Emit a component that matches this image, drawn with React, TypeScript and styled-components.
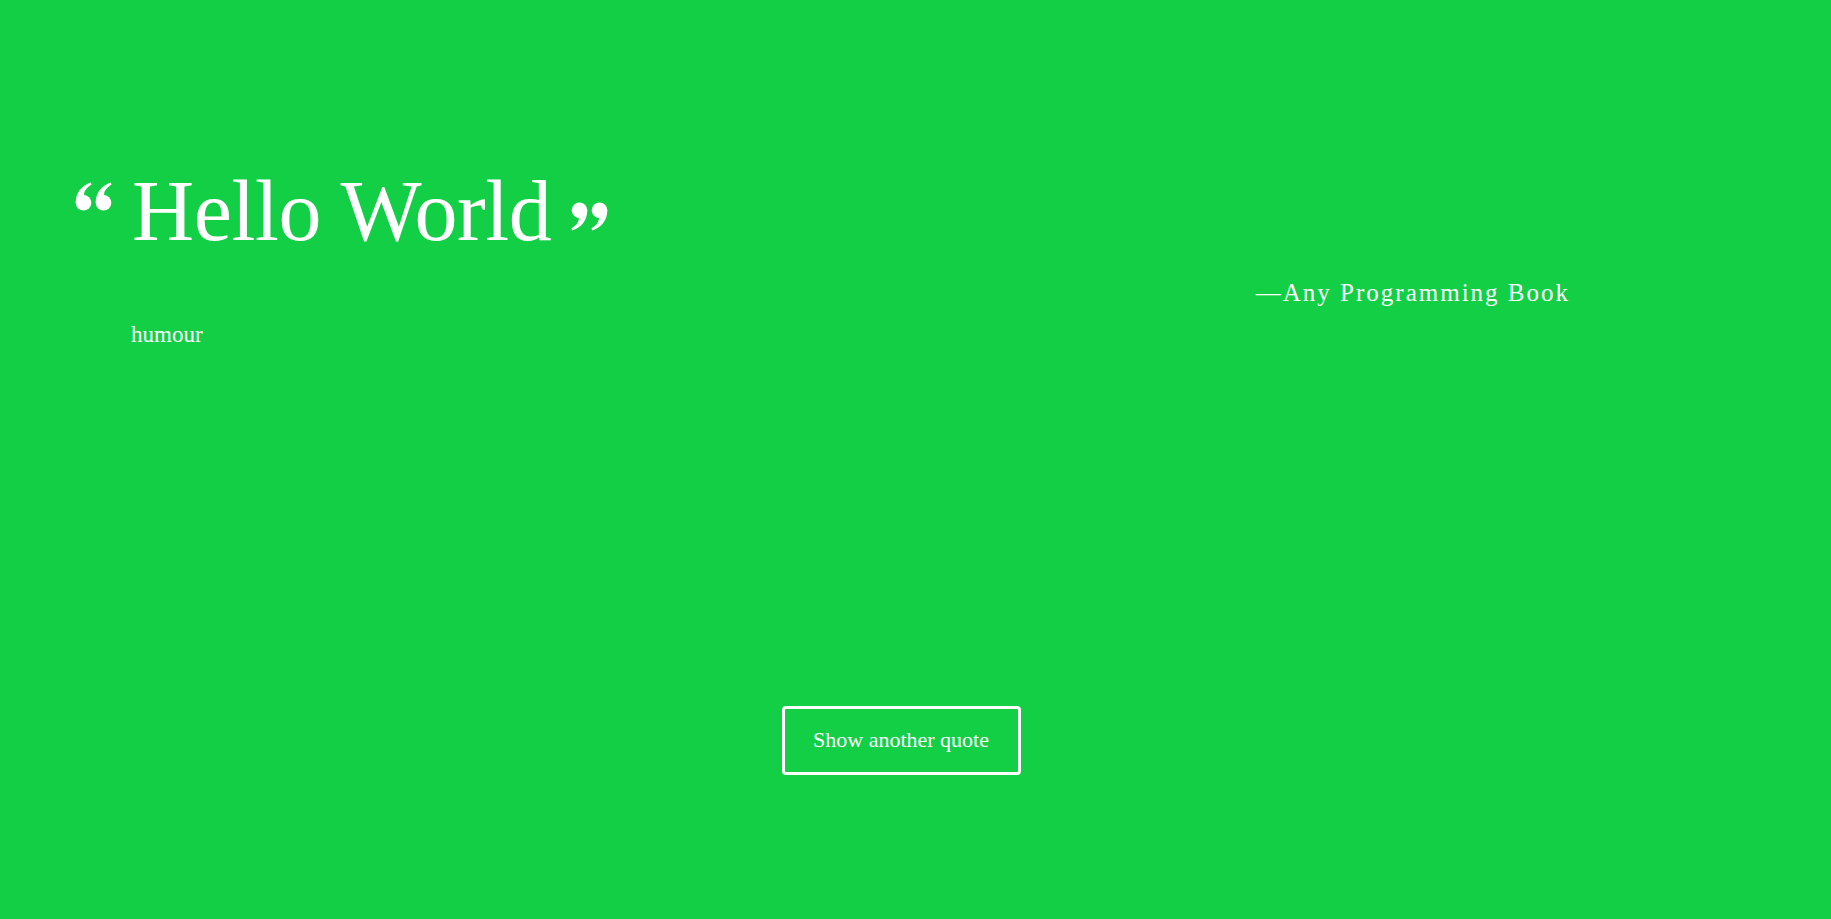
import React from "react";
import styled, { createGlobalStyle } from "styled-components";

const Global = createGlobalStyle`
  html, body { margin: 0; padding: 0; }
  body {
    background: #12cf46;
    font-family: "Liberation Serif", "Times New Roman", serif;
    color: #ffffff;
  }
`;

const Page = styled.main`
  min-height: 919px;
  box-sizing: border-box;
  background: #12cf46;
  display: flex;
  flex-direction: column;
  padding: 160px 261px 0 75px;
`;

const QuoteRow = styled.div`
  display: flex;
  align-items: flex-start;
`;

const Mark = styled.svg<{ $offset: number; $flip?: boolean }>`
  flex: none;
  width: 38px;
  height: 29px;
  margin-top: ${(p) => p.$offset}px;
  transform: ${(p) => (p.$flip ? "rotate(180deg)" : "none")};
`;

const Heading = styled.h1`
  margin: 0 19px 0 19px;
  font-family: "Liberation Serif", "Times New Roman", serif;
  font-weight: 400;
  font-size: 86px;
  line-height: 1.2;
  letter-spacing: -0.4px;
  white-space: nowrap;
`;

const Author = styled.p`
  margin: 15px 0 0;
  align-self: flex-end;
  font-family: "Liberation Serif", "Times New Roman", serif;
  font-size: 25px;
  line-height: 1.2;
  letter-spacing: 2px;
`;

const Tag = styled.p`
  margin: 13px 0 0 56px;
  font-family: "Liberation Serif", "Times New Roman", serif;
  font-size: 23px;
  line-height: 1.2;
`;

const Footer = styled.div`
  display: flex;
  justify-content: center;
  margin: 357px -261px 0 -75px;
  padding-right: 29px;
`;

const Button = styled.button`
  box-sizing: border-box;
  width: 239px;
  height: 69px;
  background: transparent;
  border: 3px solid #ffffff;
  border-radius: 4px;
  color: #ffffff;
  font-family: "Liberation Serif", "Times New Roman", serif;
  font-size: 22px;
  cursor: pointer;
`;

const QuoteGlyph: React.FC<{ offset: number; flip?: boolean }> = ({ offset, flip }) => (
  <Mark $offset={offset} $flip={flip} viewBox="0 0 38 29" aria-hidden="true">
    {[0, 20].map((dx) => (
      <g key={dx} transform={`translate(${dx} 0)`} fill="#ffffff">
        <circle cx="8.5" cy="20.8" r="7.8" />
        <path d="M0.7 20.8 C0.7 11 6 4 15.6 0.5 L16.6 2.6 C11 6 8.6 10 9.2 13.5 Z" />
      </g>
    ))}
  </Mark>
);

export default function App() {
  return (
    <>
      <Global />
      <Page>
        <QuoteRow>
          <QuoteGlyph offset={22} />
          <Heading>Hello World</Heading>
          <QuoteGlyph offset={42} flip />
        </QuoteRow>
        <Author>—Any Programming Book</Author>
        <Tag>humour</Tag>
        <Footer>
          <Button type="button">Show another quote</Button>
        </Footer>
      </Page>
    </>
  );
}
